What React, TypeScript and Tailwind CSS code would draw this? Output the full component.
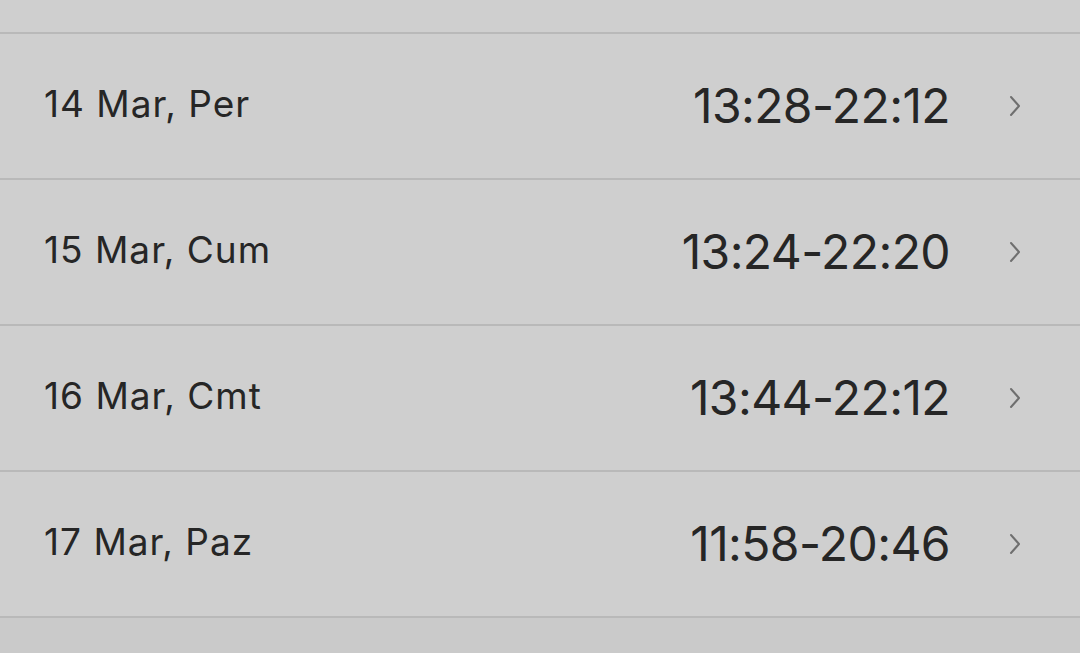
const days = [
  { date: "14 Mar, Per", time: "13:28-22:12" },
  { date: "15 Mar, Cum", time: "13:24-22:20" },
  { date: "16 Mar, Cmt", time: "13:44-22:12" },
  { date: "17 Mar, Paz", time: "11:58-20:46" },
];

function Chevron() {
  return (
    <svg width="14" height="24" viewBox="0 0 14 24" fill="none" className="text-[#6f6f6f]">
      <path d="M3 3l8 9-8 9" stroke="currentColor" strokeWidth="2" strokeLinecap="round" strokeLinejoin="round" />
    </svg>
  );
}

export default function App() {
  return (
    <div className="h-[653px] w-[1080px] overflow-hidden bg-[#cacaca] font-['Inter',sans-serif] text-[#262626]">
      <div className="h-[32px] bg-[#cfcfcf]" />
      <div className="border-t-2 border-[#b9b9b9]">
        {days.map((d) => (
          <div
            key={d.date}
            className="flex h-[146px] items-center border-b-2 border-[#b9b9b9] bg-[#cfcfcf] pl-[44px] pr-[58px]"
          >
            <span className="-mt-[4px] flex-1 text-[37px] tracking-[1px]">{d.date}</span>
            <span className="text-[48px] tracking-[-0.6px]">{d.time}</span>
            <span className="ml-[58px] flex items-center">
              <Chevron />
            </span>
          </div>
        ))}
      </div>
    </div>
  );
}
